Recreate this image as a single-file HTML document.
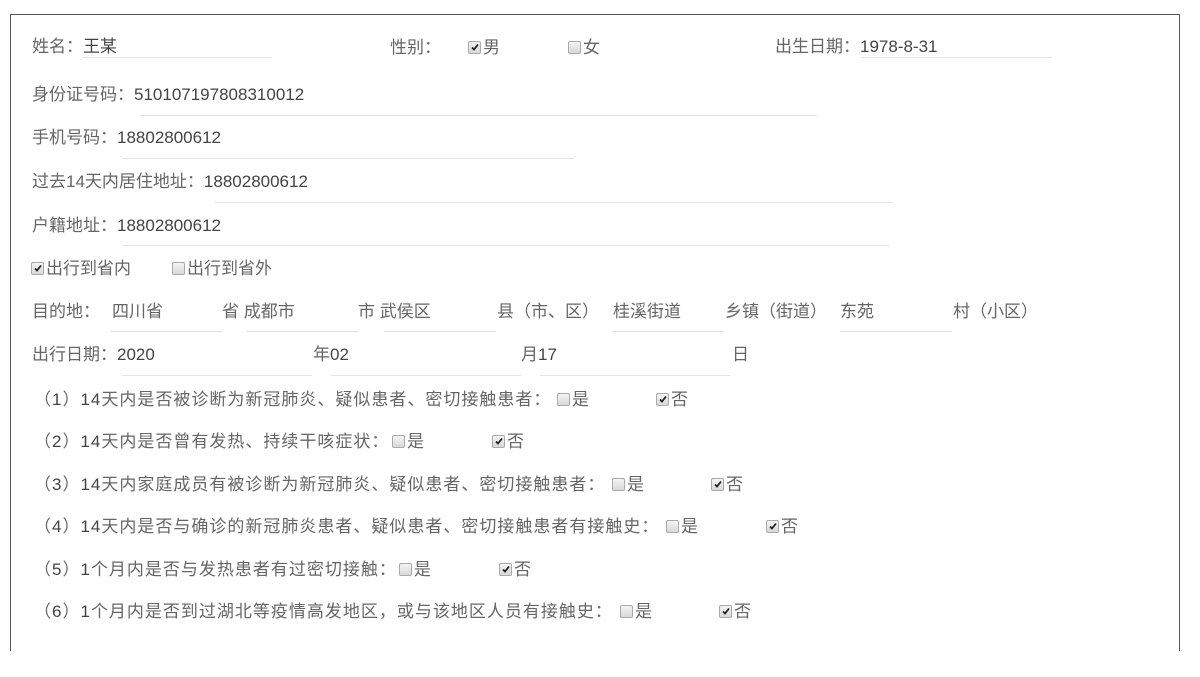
<!DOCTYPE html>
<html><head><meta charset="utf-8"><style>
body{margin:0;width:1200px;height:677px;background:#fff;position:relative;overflow:hidden;font-family:"Liberation Sans","Noto Sans CJK SC",sans-serif;font-size:17px;color:#666}
.box{position:absolute;left:10px;top:14px;width:1168px;height:636px;border:1.5px solid #555;border-bottom:none}
.t{position:absolute;white-space:nowrap;line-height:20px;top:0}
.v{color:#444}
.u{position:absolute;height:1px;background:#e4e4e4}
.cb{display:inline-block;width:11px;height:11px;border:1px solid #aaa;border-radius:2px;background:linear-gradient(#f4f4f4,#d8d8d8);vertical-align:-1px;margin-right:2px;position:relative}
.cb.c::after{content:"";position:absolute;left:2px;top:1px;width:8px;height:8px;background:no-repeat center/8px 8px url("data:image/svg+xml,%3Csvg xmlns='http://www.w3.org/2000/svg' viewBox='0 0 8 8'%3E%3Cpath d='M1 4.5 L3 6.5 L7 1.5' stroke='%23222' stroke-width='1.8' fill='none'/%3E%3C/svg%3E")}
.q{letter-spacing:1px}
</style></head><body>
<div class="box"></div>

<div class="t" style="left:32px;top:37px">姓名：<span class="v">王某</span></div>
<div class="u" style="left:82px;top:57px;width:190px"></div>
<div class="t" style="left:390px;top:38px">性别：</div>
<div class="t" style="left:468px;top:38px"><span class="cb c"></span>男</div>
<div class="t" style="left:568px;top:38px"><span class="cb"></span>女</div>
<div class="t" style="left:775px;top:37px">出生日期：<span class="v">1978-8-31</span></div>
<div class="u" style="left:862px;top:57px;width:190px"></div>

<div class="t" style="left:32px;top:85px">身份证号码：<span class="v">510107197808310012</span></div>
<div class="u" style="left:140px;top:115px;width:677px"></div>
<div class="t" style="left:32px;top:128px">手机号码：<span class="v">18802800612</span></div>
<div class="u" style="left:122px;top:158px;width:452px"></div>
<div class="t" style="left:32px;top:172px">过去14天内居住地址：<span class="v">18802800612</span></div>
<div class="u" style="left:215px;top:202px;width:678px"></div>
<div class="t" style="left:32px;top:216px">户籍地址：<span class="v">18802800612</span></div>
<div class="u" style="left:122px;top:245px;width:767px"></div>

<div class="t" style="left:31px;top:259px"><span class="cb c"></span>出行到省内</div>
<div class="t" style="left:172px;top:259px"><span class="cb"></span>出行到省外</div>

<div class="t" style="left:32px;top:302px">目的地：</div>
<div class="t" style="left:112px;top:302px">四川省</div>
<div class="t" style="left:222px;top:302px">省 成都市</div>
<div class="t" style="left:358px;top:302px">市 武侯区</div>
<div class="t" style="left:497px;top:302px">县（市、区）</div>
<div class="t" style="left:613px;top:302px">桂溪街道</div>
<div class="t" style="left:725px;top:302px">乡镇（街道）</div>
<div class="t" style="left:840px;top:302px">东苑</div>
<div class="t" style="left:953px;top:302px">村（小区）</div>
<div class="u" style="left:110px;top:331px;width:112px"></div>
<div class="u" style="left:246px;top:331px;width:112px"></div>
<div class="u" style="left:384px;top:331px;width:112px"></div>
<div class="u" style="left:612px;top:331px;width:112px"></div>
<div class="u" style="left:840px;top:331px;width:112px"></div>

<div class="t" style="left:32px;top:345px">出行日期：<span class="v">2020</span></div>
<div class="t" style="left:313px;top:345px">年<span class="v">02</span></div>
<div class="t" style="left:521px;top:345px">月<span class="v">17</span></div>
<div class="t" style="left:732px;top:345px">日</div>
<div class="u" style="left:122px;top:375px;width:190px"></div>
<div class="u" style="left:331px;top:375px;width:190px"></div>
<div class="u" style="left:540px;top:375px;width:190px"></div>

<div class="t q" style="left:34px;top:390px">（<span class="v">1</span>）<span class="v">14</span>天内是否被诊断为新冠肺炎、疑似患者、密切接触患者：</div>
<div class="t" style="left:557px;top:390px"><span class="cb"></span>是</div>
<div class="t" style="left:656px;top:390px"><span class="cb c"></span>否</div>
<div class="t q" style="left:34px;top:432px">（<span class="v">2</span>）<span class="v">14</span>天内是否曾有发热、持续干咳症状：</div>
<div class="t" style="left:392px;top:432px"><span class="cb"></span>是</div>
<div class="t" style="left:492px;top:432px"><span class="cb c"></span>否</div>
<div class="t q" style="left:34px;top:475px">（<span class="v">3</span>）<span class="v">14</span>天内家庭成员有被诊断为新冠肺炎、疑似患者、密切接触患者：</div>
<div class="t" style="left:612px;top:475px"><span class="cb"></span>是</div>
<div class="t" style="left:711px;top:475px"><span class="cb c"></span>否</div>
<div class="t q" style="left:34px;top:517px">（<span class="v">4</span>）<span class="v">14</span>天内是否与确诊的新冠肺炎患者、疑似患者、密切接触患者有接触史：</div>
<div class="t" style="left:666px;top:517px"><span class="cb"></span>是</div>
<div class="t" style="left:766px;top:517px"><span class="cb c"></span>否</div>
<div class="t q" style="left:34px;top:560px">（<span class="v">5</span>）<span class="v">1</span>个月内是否与发热患者有过密切接触：</div>
<div class="t" style="left:399px;top:560px"><span class="cb"></span>是</div>
<div class="t" style="left:499px;top:560px"><span class="cb c"></span>否</div>
<div class="t q" style="left:34px;top:602px">（<span class="v">6</span>）<span class="v">1</span>个月内是否到过湖北等疫情高发地区，或与该地区人员有接触史：</div>
<div class="t" style="left:620px;top:602px"><span class="cb"></span>是</div>
<div class="t" style="left:719px;top:602px"><span class="cb c"></span>否</div>
</body></html>
